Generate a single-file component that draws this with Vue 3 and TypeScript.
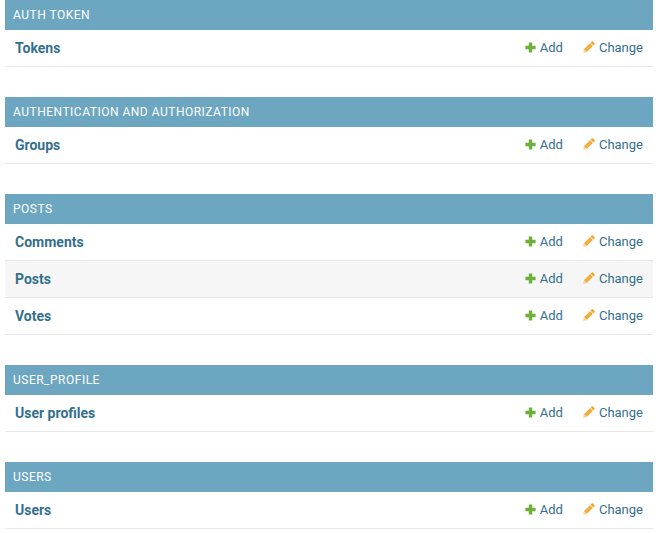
<script setup lang="ts">
interface Group { title: string; rows: string[] }
const groups: Group[] = [
  { title: 'Auth Token', rows: ['Tokens'] },
  { title: 'Authentication and Authorization', rows: ['Groups'] },
  { title: 'Posts', rows: ['Comments', 'Posts', 'Votes'] },
  { title: 'User_Profile', rows: ['User profiles'] },
  { title: 'Users', rows: ['Users'] },
]
</script>

<template>
  <main class="page">
    <section v-for="g in groups" :key="g.title" class="module">
      <h2 class="caption">{{ g.title }}</h2>
      <div v-for="(r, i) in g.rows" :key="r" class="row" :class="{ alt: i === 1 }">
        <a class="name">{{ r }}</a>
        <a class="action add">
          <svg width="11" height="11" viewBox="0 0 11 11"><path d="M3.8.4h3.4v3.4h3.4v3.4H7.2v3.4H3.8V7.2H.4V3.8h3.4z" fill="#6cb03a" /></svg>
          <span>Add</span>
        </a>
        <a class="action">
          <svg width="12" height="12" viewBox="0 0 12 12">
            <path d="M8.6.6a1.1 1.1 0 0 1 1.5 0l1.3 1.3a1.1 1.1 0 0 1 0 1.5l-1 1-2.8-2.8z" fill="#eea52f" />
            <path d="M7.1 2.1 9.9 4.9 3.7 11.1.9 8.3z" fill="#f0ae3f" />
            <path d="M.7 8.6 3.4 11.3.2 11.8z" fill="#f6cf8e" />
          </svg>
          <span>Change</span>
        </a>
      </div>
    </section>
  </main>
</template>

<style scoped>
.page {
  padding: 0 8px 0 5px;
  font-family: Roboto, "Liberation Sans", sans-serif;
  background: #fff;
}
.module {
  margin-bottom: 30px;
}
.caption {
  margin: 0;
  height: 30px;
  padding: 0 8px;
  display: flex;
  align-items: center;
  background: #6ca6c1;
  color: #fff;
  font-size: 12px;
  font-weight: 400;
  letter-spacing: 0.5px;
  text-transform: uppercase;
}
.row {
  height: 37px;
  box-sizing: border-box;
  border-bottom: 1px solid #e8e8e8;
  display: flex;
  align-items: center;
  padding: 0 10px;
  color: #34708c;
  font-size: 13px;
}
.alt {
  background: #f6f6f6;
}
.name {
  flex: 1;
  font-size: 14px;
  font-weight: 700;
}
.action {
  display: flex;
  align-items: center;
  gap: 4px;
  padding-bottom: 2px;
}
.add {
  margin-right: 20px;
}
</style>
